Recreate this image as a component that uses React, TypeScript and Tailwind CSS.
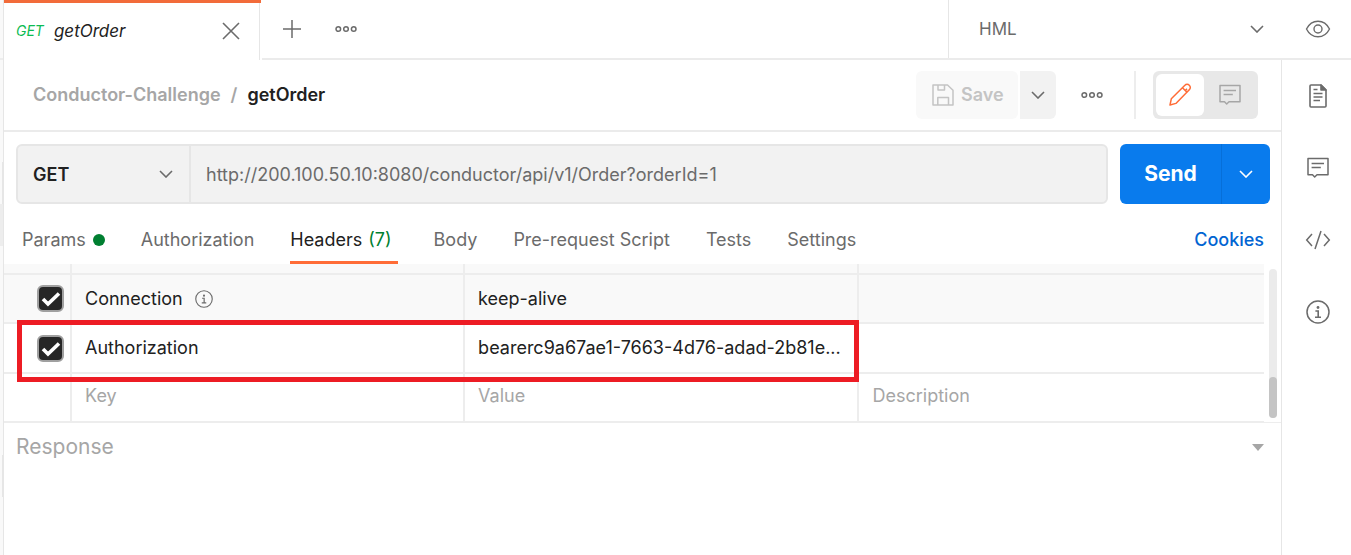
import type { ReactNode } from "react";

function Chevron({ className = "" }: { className?: string }) {
  return (
    <svg width="14" height="8" viewBox="0 0 14 8" fill="none" stroke="currentColor" strokeWidth="1.6" className={className} aria-hidden="true">
      <path d="M1 1l6 6 6-6" />
    </svg>
  );
}

function Dots() {
  return (
    <svg width="22" height="8" viewBox="0 0 22 8" fill="none" stroke="currentColor" strokeWidth="1.5" aria-hidden="true">
      <circle cx="3.3" cy="4" r="2.3" />
      <circle cx="11" cy="4" r="2.3" />
      <circle cx="18.7" cy="4" r="2.3" />
    </svg>
  );
}

function CommentIcon() {
  return (
    <svg width="24" height="24" viewBox="0 0 24 24" fill="none" stroke="currentColor" strokeWidth="1.5" aria-hidden="true">
      <path d="M2 2.4h20v16.400h-11L8.700 21l-2.200-2.200H2z" strokeLinejoin="round" />
      <path d="M5.600 7.500h12.400M5.600 11.500h9.200" />
    </svg>
  );
}

function InfoIcon({ size }: { size: number }) {
  return (
    <svg width={size} height={size} viewBox="0 0 24 24" fill="none" stroke="currentColor" strokeWidth="1.5" aria-hidden="true">
      <circle cx="12" cy="12" r="11" />
      <circle cx="12" cy="7.5" r="1.4" fill="currentColor" stroke="none" />
      <path d="M9.4 11h2.8v6M9 17.2h6" strokeWidth="1.6" />
    </svg>
  );
}

function PencilIcon() {
  return (
    <svg width="24" height="24" viewBox="0 0 24 24" fill="none" stroke="currentColor" strokeWidth="1.5" strokeLinejoin="round" aria-hidden="true">
      <path d="M2 22l1.3-6.2L16.9 2.3a2.9 2.9 0 0 1 4.4 0 2.9 2.9 0 0 1 .2 4.2L7.9 20.4z" />
      <path d="M14.4 4.8l4.8 4.6M17 8l2-2.2" />
    </svg>
  );
}

function SaveIcon() {
  return (
    <svg width="22" height="22" viewBox="0 0 22 22" fill="none" stroke="currentColor" strokeWidth="1.5" strokeLinejoin="round" aria-hidden="true">
      <path d="M1 1h14.5L21 6.300V21H1z" />
      <path d="M6 1v5h6.500V1M5.800 21v-7.500h10.700V21" />
    </svg>
  );
}

function DocIcon() {
  return (
    <svg width="20" height="24" viewBox="0 0 20 24" fill="none" stroke="currentColor" strokeWidth="1.6" strokeLinejoin="round" aria-hidden="true">
      <path d="M3 1h10l5 5v16q0 1-1 1H3q-1 0-1-1V2q0-1 1-1z" />
      <path d="M13 1v5h5z" fill="currentColor" />
      <path d="M5.500 5.500h4M5.500 9.500h9M5.500 13h9M5.500 16.500h6.500" />
    </svg>
  );
}

function CodeIcon() {
  return (
    <svg width="26" height="20" viewBox="0 0 26 20" fill="none" stroke="currentColor" strokeWidth="1.5" aria-hidden="true">
      <path d="M7 4L1.700 10 7 16M19 4l5.300 6L19 16M16 1l-6 18" />
    </svg>
  );
}

function EyeIcon() {
  return (
    <svg width="26" height="18" viewBox="0 0 26 18" fill="none" stroke="currentColor" strokeWidth="1.4" aria-hidden="true">
      <path d="M1.500 9C4 4 8 1.200 13 1.200S22 4 24.500 9C22 14 18 16.800 13 16.800S4 14 1.500 9z" />
      <circle cx="13" cy="9" r="4" />
    </svg>
  );
}

function Check({ label }: { label: string }) {
  return (
    <label className="relative ml-[33px] block h-[27px] w-[27px]">
      <input type="checkbox" defaultChecked aria-label={label} className="peer block h-full w-full appearance-none rounded-md border-2 border-[#a0a0a0] bg-white checked:bg-[#262626]" />
      <svg viewBox="0 0 27 27" fill="none" stroke="white" strokeWidth="3.6" className="pointer-events-none absolute inset-0 hidden peer-checked:block" aria-hidden="true">
        <path d="M6 14l5 5L22 8.500" />
      </svg>
    </label>
  );
}

function Tab({ children, active = false }: { children: ReactNode; active?: boolean }) {
  return (
    <button
      type="button"
      role="tab"
      aria-selected={active}
      className={
        active
          ? "flex h-full items-center border-b-[3px] border-[#ff6c37] pt-[15px] pr-1.5 text-[#212121]"
          : "flex h-full items-center pt-3 text-[#6b6b6b]"
      }
    >
      {children}
    </button>
  );
}

const cell = "border-r-2 border-b-2 border-[#ededed] pl-[13px] pr-3";
const inputCell = "border-r-2 border-b-2 border-[#ededed] pl-[13px] pr-3 pb-1";
const lastCell = "border-b-2 border-[#ededed] pl-[13px] pr-3 pb-1";
const field = "block w-full bg-transparent outline-none placeholder:text-[#a6a6a6]";

export default function App() {
  return (
    <div className="flex min-h-screen bg-white font-['Inter',sans-serif] text-lg leading-6 text-[#6b6b6b]">
      <div className="flex w-1 shrink-0 flex-col border-r border-[#e6e6e6] bg-[#f9f9f9]">
        <div className="h-[60px] border-b-2 border-[#ededed]" />
        <div className="mt-[102px] h-[42px] border-r border-[#e6e6e6]" />
        <div className="h-[42px] bg-[#ededed]" />
        <div className="mt-[209px] h-[42px] border-r border-[#e6e6e6]" />
      </div>

      <div className="flex min-w-0 flex-1 flex-col">
        <header className="flex h-[60px]">
          <div className="flex w-[257px] shrink-0 border-t-[3px] border-[#f26b3a] pr-px">
            <div className="flex flex-1 items-center border-r border-[#e6e6e6] pr-[18px] pb-0.5 pl-3">
              <span className="text-sm text-[#0cbb52] italic">GET</span>
              <span className="ml-[10px] flex-1 text-[17px] text-[#212121] italic">getOrder</span>
              <button type="button" aria-label="Close tab">
                <svg width="20" height="20" viewBox="0 0 20 20" fill="none" stroke="currentColor" strokeWidth="1.6" aria-hidden="true">
                  <path d="M2 2l16 16M18 2L2 18" />
                </svg>
              </button>
            </div>
          </div>
          <div className="ml-px flex min-w-0 flex-1 border-b-2 border-[#ebebeb]">
            <div className="flex flex-1 items-center gap-[34px] pl-[21px]">
              <button type="button" aria-label="New tab">
                <svg width="18" height="18" viewBox="0 0 18 18" fill="none" stroke="currentColor" strokeWidth="1.500" aria-hidden="true">
                  <path d="M9 0v18M0 9h18" />
                </svg>
              </button>
              <button type="button" aria-label="Tab options"><Dots /></button>
            </div>
            <div className="relative flex w-[333px] items-center border-l border-[#e6e6e6]">
              <select aria-label="Environment" className="h-full w-full appearance-none bg-transparent pl-[30px] text-[17px] outline-none">
                <option>HML</option>
              </select>
              <Chevron className="pointer-events-none absolute right-[17px]" />
            </div>
            <button type="button" aria-label="Environment quick look" className="flex w-[70px] items-center justify-center pl-1">
              <EyeIcon />
            </button>
          </div>
        </header>

        <div className="flex flex-1">
          <main className="flex min-w-0 flex-1 flex-col">
            <div className="flex h-[72px] items-center border-b-2 border-[#ebebeb] pr-[23px] pl-[29px]">
              <nav aria-label="Breadcrumb" className="flex flex-1 gap-[10px] font-semibold">
                <a href="#collection" className="text-[#a6a6a6]">Conductor-Challenge</a>
                <span className="text-[#a6a6a6]">/</span>
                <span className="text-[#212121]">getOrder</span>
              </nav>
              <div className="flex h-12 gap-0.5">
                <button type="button" disabled className="flex w-[102px] items-center gap-[7px] rounded-md bg-[#f9f9f9] pl-4 font-semibold text-[#c4c4c4]">
                  <SaveIcon />
                  Save
                </button>
                <button type="button" aria-label="Save options" className="flex w-9 items-center justify-center rounded-md rounded-l-none bg-[#f2f2f2]">
                  <Chevron />
                </button>
              </div>
              <button type="button" aria-label="More actions" className="ml-[25px]"><Dots /></button>
              <div className="ml-[31px] h-12 w-0.5 bg-[#ededed]" />
              <div className="ml-[17px] flex h-12 rounded-md bg-[#e8e8e8] p-[3px]">
                <button type="button" aria-label="Edit" className="flex w-12 items-center justify-center rounded-md bg-white text-[#ff6c37]">
                  <PencilIcon />
                </button>
                <button type="button" aria-label="Comments" className="flex w-[51px] items-center justify-center text-[#a6a6a6]">
                  <CommentIcon />
                </button>
              </div>
            </div>

            <div className="mt-3 flex h-[60px] gap-3 pr-[11px] pl-3">
              <div className="flex min-w-0 flex-1 rounded-md border-2 border-[#e6e6e6] bg-[#f2f2f2]">
                <div className="relative flex w-[173px] shrink-0 items-center border-r-2 border-[#e6e6e6]">
                  <select aria-label="Method" className="h-full w-full appearance-none bg-transparent pt-0.5 pl-[15px] font-semibold text-[#212121] outline-none">
                    <option>GET</option>
                  </select>
                  <Chevron className="pointer-events-none absolute right-4" />
                </div>
                <input
                  type="text"
                  aria-label="Request URL"
                  defaultValue="http://200.100.50.10:8080/conductor/api/v1/Order?orderId=1"
                  className="min-w-0 flex-1 bg-transparent pt-0.5 pl-[15px] text-[#6b6b6b] outline-none"
                />
              </div>
              <div className="flex text-white">
                <button type="button" className="w-[101px] rounded-l-md bg-[#097bed] text-[21px] font-bold">Send</button>
                <button type="button" aria-label="Send options" className="flex w-[49px] items-center justify-center rounded-r-md border-l border-[#066fd9] bg-[#097bed]">
                  <Chevron />
                </button>
              </div>
            </div>

            <div className="flex h-[60px] items-center pr-[17px] pl-[18px]">
              <div role="tablist" className="flex h-full flex-1 gap-9">
                <Tab>
                  Params
                  <span className="ml-[7px] h-3 w-3 rounded-full bg-[#007f31]" />
                </Tab>
                <Tab>Authorization</Tab>
                <Tab active>
                  Headers <span className="ml-1.5 text-[#007f31]">(7)</span>
                </Tab>
                <Tab>Body</Tab>
                <Tab>Pre-request Script</Tab>
                <Tab>Tests</Tab>
                <Tab>Settings</Tab>
              </div>
              <a href="#cookies" className="pt-3 font-medium text-[#0265d2]">Cookies</a>
            </div>

            <div className="relative flex gap-[5px] border-b border-[#ededed] pr-1">
              <div className="relative -mb-px min-w-0 flex-1">
                <table className="w-full table-fixed border-separate border-spacing-0 text-left text-[#212121]">
                  <colgroup>
                    <col className="w-[68px]" />
                    <col className="w-[31.2%]" />
                    <col className="w-[31.3%]" />
                    <col />
                  </colgroup>
                  <tbody>
                    <tr className="h-[11px] bg-[#f9f9f9]">
                      <td className="border-r-2 border-b-2 border-[#ededed]" />
                      <td className="border-r-2 border-b-2 border-[#ededed]" />
                      <td className="border-r-2 border-b-2 border-[#ededed]" />
                      <td className="border-b-2 border-[#ededed]" />
                    </tr>
                    <tr className="h-[49px] bg-[#f9f9f9]">
                      <td className="border-r-2 border-b-2 border-[#ededed] p-0"><Check label="Include Connection" /></td>
                      <td className={cell}>
                        <div className="flex items-center gap-3">
                          Connection
                          <span className="text-[#6b6b6b]"><InfoIcon size={18} /></span>
                        </div>
                      </td>
                      <td className={cell}>keep-alive</td>
                      <td className={lastCell} />
                    </tr>
                    <tr className="h-[50px]">
                      <td className="border-r-2 border-b-2 border-[#ededed] p-0"><Check label="Include Authorization" /></td>
                      <td className={cell}>Authorization</td>
                      <td className={cell}><div className="truncate">bearerc9a67ae1-7663-4d76-adad-2b81e...</div></td>
                      <td className={lastCell} />
                    </tr>
                    <tr className="h-[49px]">
                      <td className="border-r-2 border-b-2 border-[#ededed]" />
                      <td className={inputCell}><input className={field} aria-label="Key" placeholder="Key" /></td>
                      <td className={inputCell}><input className={field} aria-label="Value" placeholder="Value" /></td>
                      <td className={lastCell}><input className={field} aria-label="Description" placeholder="Description" /></td>
                    </tr>
                  </tbody>
                </table>
                <div className="pointer-events-none absolute top-14 left-[13px] h-[62px] w-[66.8%] border-[5px] border-[#ed1c24]" />
              </div>
              <div className="mt-[5px] mb-1 flex w-2 items-end rounded-full bg-[#ebebeb]">
                <div className="h-[41px] w-full rounded-full bg-[#c4c4c4]" />
              </div>
            </div>

            <section className="flex items-center justify-between pt-2 pr-[17px] pl-3">
              <h2 className="text-[21px] leading-8 text-[#a6a6a6]">Response</h2>
              <button type="button" aria-label="Collapse response" className="text-[#a6a6a6]">
                <svg width="12" height="7" viewBox="0 0 12 7" fill="currentColor" aria-hidden="true">
                  <path d="M0 0h12L6 7z" />
                </svg>
              </button>
            </section>
          </main>

          <aside className="flex w-[70px] shrink-0 flex-col items-center border-l border-[#e6e6e6] pl-[3px]">
            <button type="button" aria-label="Documentation" className="flex h-[72px] items-center"><DocIcon /></button>
            <button type="button" aria-label="Comments" className="flex h-[72px] items-center"><CommentIcon /></button>
            <button type="button" aria-label="Code" className="flex h-[72px] items-center"><CodeIcon /></button>
            <button type="button" aria-label="Info" className="flex h-[72px] items-center"><InfoIcon size={24} /></button>
          </aside>
        </div>
      </div>
    </div>
  );
}
